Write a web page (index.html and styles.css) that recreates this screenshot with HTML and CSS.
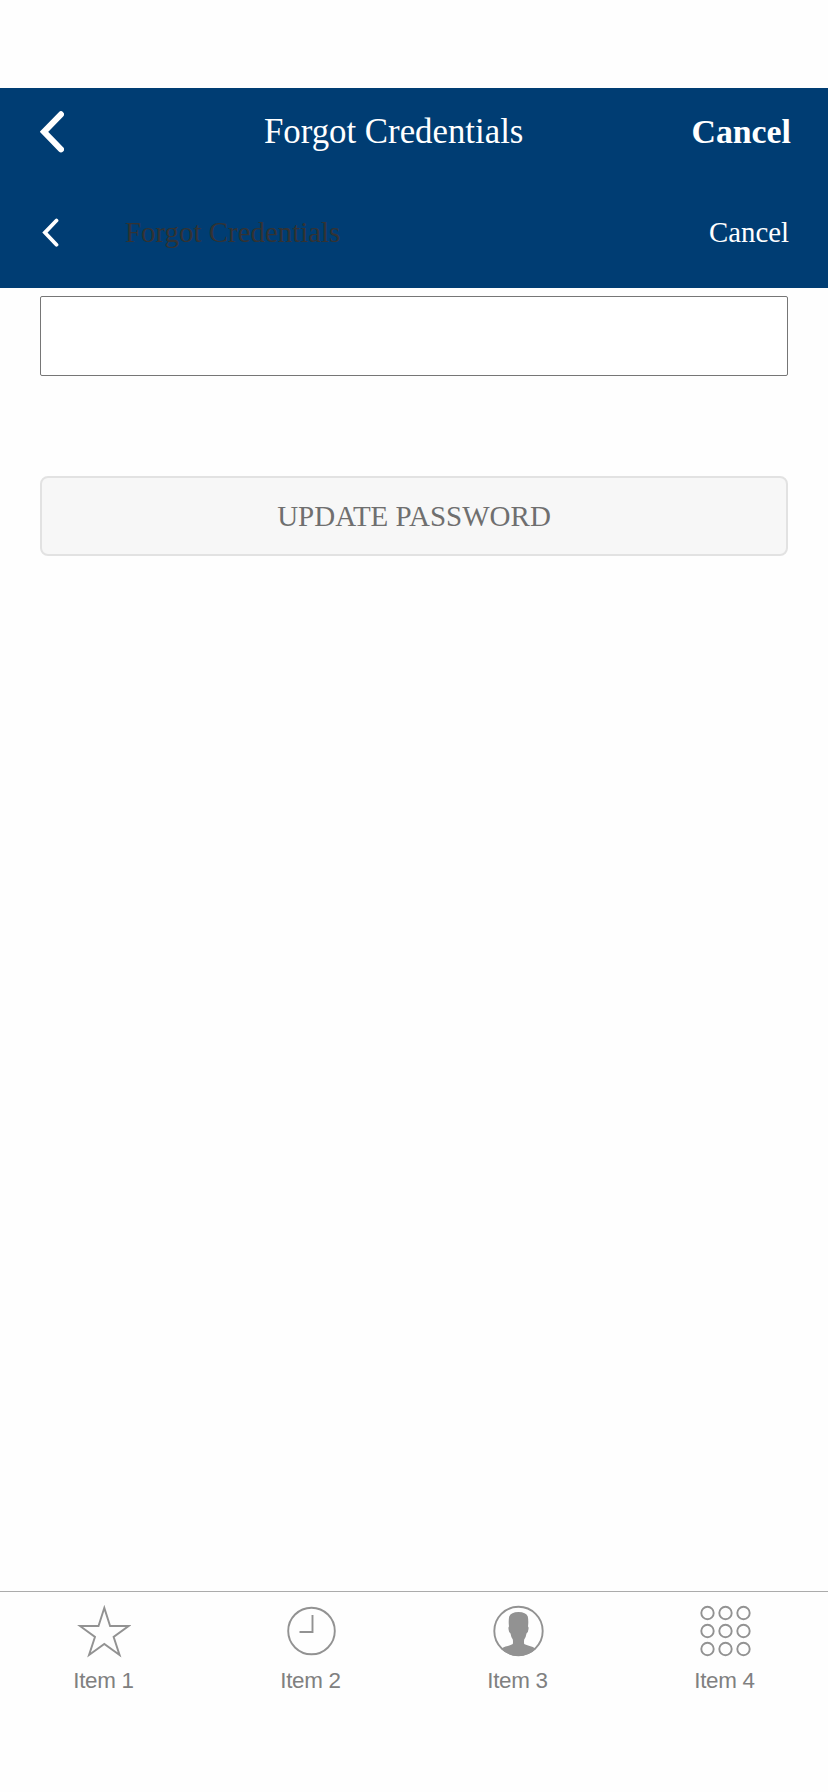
FILE: index.html
```html
<!DOCTYPE html>
<html lang="en">
<head>
<meta charset="utf-8">
<title>Forgot Credentials</title>
<link rel="stylesheet" href="styles.css">
</head>
<body>
<div class="screen">
  <header class="header">
    <div class="nav">
      <svg class="back" width="24" height="42" viewBox="0 0 24 42"><path d="M21 3.3L4 20.8L21 38.3"/></svg>
      <h1 class="title">Forgot Credentials</h1>
      <a class="cancel">Cancel</a>
    </div>
    <div class="nav nav-small">
      <svg class="back" width="20" height="30" viewBox="0 0 20 30"><path d="M16.5 2.5L4.9 14.6L16.5 26.7"/></svg>
      <h2 class="title">Forgot Credentials</h2>
      <a class="cancel">Cancel</a>
    </div>
  </header>
  <main class="form">
    <input class="field" type="text" aria-label="Username">
    <button class="submit"><span>UPDATE PASSWORD</span></button>
  </main>
  <footer class="tabs">
    <div class="tab">
      <svg class="icon" width="54" height="54" viewBox="0 0 54 54"><path d="M27.3 3.9L33.1 22H51.6L36.6 32.9L42.6 51.1L27.3 40L12 51.1L18 32.9L3 22H21.5Z"/></svg>
      <span>Item 1</span>
    </div>
    <div class="tab">
      <svg class="icon" width="54" height="54" viewBox="0 0 54 54"><circle cx="27.5" cy="27" r="23.3"/><path d="M28.5 11V28H15.5"/></svg>
      <span>Item 2</span>
    </div>
    <div class="tab">
      <svg class="icon" width="54" height="54" viewBox="0 0 54 54"><circle cx="27.5" cy="27" r="24.2"/><path class="solid" d="M10 45C14 41.8 19 41.8 21.8 40Q22.2 38 21.8 35.5Q20 33 19.5 29.5Q17.8 28.5 17.5 25Q17.3 22.7 18 22.5Q17.3 17 18.2 12.5Q20 8 27.5 8Q35 8 36.8 12.5Q37.7 17 37 22.5Q37.8 23 37.5 25Q37.2 28.5 35.5 29.5Q35 33 33.2 35.5Q32.8 38 33.2 40C36 41.8 41 41.8 45 45Q37 52 27.5 52Q18 52 10 45Z"/></svg>
      <span>Item 3</span>
    </div>
    <div class="tab">
      <svg class="icon" width="54" height="54" viewBox="0 0 54 54"><circle cx="9.5" cy="9" r="6.2"/><circle cx="27.5" cy="9" r="6.2"/><circle cx="45.5" cy="9" r="6.2"/><circle cx="9.5" cy="27" r="6.2"/><circle cx="27.5" cy="27" r="6.2"/><circle cx="45.5" cy="27" r="6.2"/><circle cx="9.5" cy="45" r="6.2"/><circle cx="27.5" cy="45" r="6.2"/><circle cx="45.5" cy="45" r="6.2"/></svg>
      <span>Item 4</span>
    </div>
  </footer>
</div>
</body>
</html>
```
FILE: styles.css
```css
* { box-sizing: border-box; }
body { margin: 0; background: #fefefe; font-family: "Liberation Serif", "Times New Roman", serif; }
.screen { height: 1792px; padding-top: 88px; display: flex; flex-direction: column; }
.header { height: 200px; background: #003d73; color: #fff; }
.nav { height: 88px; padding: 0 37px 0 40px; display: grid; grid-template-columns: 224px 1fr auto; align-items: center; }
.back { fill: none; stroke: #fff; stroke-width: 6; stroke-linecap: round; stroke-linejoin: miter; }
.title { margin: 0; font-size: 34.8px; font-weight: 400; line-height: 40px; white-space: nowrap; }
.nav .cancel { font-size: 33.8px; font-weight: 700; }
.nav-small { height: 112px; padding-left: 40px; padding-right: 39px; padding-top: 1px; grid-template-columns: 85px 1fr auto; }
.nav-small .back { stroke-width: 3.8; }
.nav-small .title { padding-bottom: 2px; font-size: 28.9px; color: #333; }
.nav-small .cancel { font-size: 28.8px; font-weight: 400; }
.form { flex: 1; padding: 8px 40px 0; display: flex; flex-direction: column; gap: 100px; }
.field { height: 80px; padding: 0 16px; border: 1px solid #767676; border-radius: 2px; background: #fff; font: inherit; font-size: 28px; }
.submit { height: 80px; border: 2px solid #e2e2e2; border-radius: 8px; background: #f7f7f7; color: #6f6f6f; font: inherit; font-size: 29px; }
.tabs { height: 201px; padding-top: 12px; border-top: 1px solid #ababab; display: grid; grid-template-columns: repeat(4, 1fr); font-family: "Liberation Sans", Arial, sans-serif; font-size: 22.4px; letter-spacing: -0.3px; line-height: 26px; color: #808080; }
.tab { display: flex; flex-direction: column; align-items: center; gap: 10px; }
.icon { fill: none; stroke: #929292; stroke-width: 1.9; }
.solid { fill: #929292; stroke: none; }
```
